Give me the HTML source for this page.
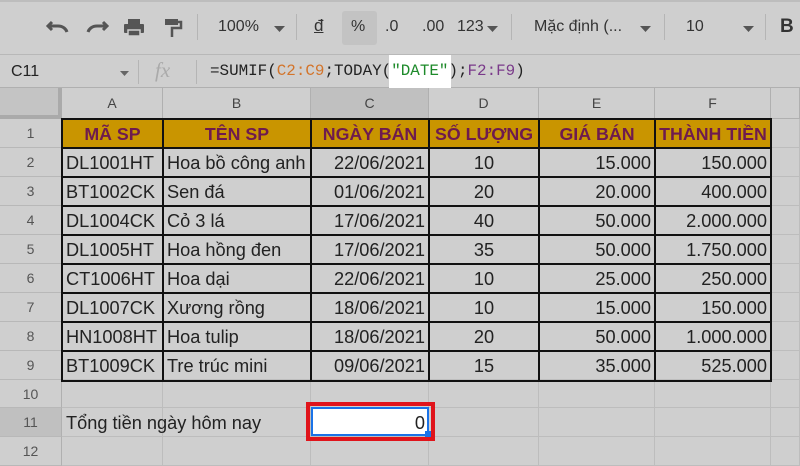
<!DOCTYPE html>
<html><head><meta charset="utf-8"><style>
*{margin:0;padding:0;box-sizing:border-box}
body{width:800px;height:450px;overflow:hidden;background:#cfcfcf;font-family:"Liberation Sans",Arial,sans-serif;position:relative;color:#222}
.a{position:absolute}
.tb{left:0;top:0;width:800px;height:55px;background:#cfcfcf;border-top:2px solid #bdbdbd;border-bottom:1px solid #b8b8b8}
.fb{left:0;top:55px;width:800px;height:33px;border-bottom:1px solid #b0b0b0}
.sep{width:1px;background:#b5b5b5}
.c{position:absolute;font-size:18.2px;line-height:30px;white-space:nowrap;overflow:hidden;padding:0 4px}
.h{background:#c99500;color:#6e1b4e;font-weight:bold;text-align:center;font-size:17.8px;padding:0 2px}
.mono{font-family:"Liberation Mono",monospace}
</style></head><body>
<div class="a tb"></div>
<svg class="a" style="left:45px;top:17px" width="150" height="22" viewBox="0 0 150 22">
<path d="M7 5 L3 9 L7 13 M3 9 H13 C18 9 21 12 22 15" fill="none" stroke="#555" stroke-width="3"/>
<path d="M58 5 L62 9 L58 13 M62 9 H52 C47 9 44 12 43 15" fill="none" stroke="#555" stroke-width="3"/>
<rect x="83" y="2" width="12" height="5" fill="#555"/><rect x="79" y="7" width="20" height="9" rx="1" fill="#555"/><rect x="83" y="13" width="12" height="6" fill="#555" stroke="#cfcfcf" stroke-width="1.5"/>
<rect x="120" y="2" width="13" height="6" fill="#555"/><path d="M133 5 H136 V11 H127 V20" fill="none" stroke="#555" stroke-width="2.5"/>
</svg>
<div class="a sep" style="left:197px;top:14px;height:26px"></div>
<div class="a" style="left:218px;top:18px;font-size:16px;color:#333">100%</div>
<svg class="a" style="left:274px;top:26px" width="12" height="7"><path d="M0 0H11L5.5 6Z" fill="#555"/></svg>
<div class="a sep" style="left:296px;top:14px;height:26px"></div>
<div class="a" style="left:314px;top:16px;font-size:17px;color:#333;text-decoration:underline">đ</div>
<div class="a" style="left:342px;top:11px;width:35px;height:34px;background:#c3c3c3;border-radius:3px"></div>
<div class="a" style="left:351px;top:18px;font-size:16px;color:#333">%</div>
<div class="a" style="left:385px;top:18px;font-size:16px;color:#333">.0</div>
<div class="a" style="left:422px;top:18px;font-size:16px;color:#333">.00</div>
<div class="a" style="left:457px;top:18px;font-size:16px;color:#333">123</div>
<svg class="a" style="left:487px;top:26px" width="12" height="7"><path d="M0 0H11L5.5 6Z" fill="#555"/></svg>
<div class="a sep" style="left:511px;top:14px;height:26px"></div>
<div class="a" style="left:534px;top:18px;font-size:16px;color:#333">Mặc định (...</div>
<svg class="a" style="left:640px;top:26px" width="12" height="7"><path d="M0 0H11L5.5 6Z" fill="#555"/></svg>
<div class="a sep" style="left:664px;top:14px;height:26px"></div>
<div class="a" style="left:686px;top:18px;font-size:16px;color:#333">10</div>
<svg class="a" style="left:743px;top:26px" width="12" height="7"><path d="M0 0H11L5.5 6Z" fill="#555"/></svg>
<div class="a sep" style="left:765px;top:14px;height:26px"></div>
<div class="a" style="left:780px;top:16px;font-size:19px;font-weight:bold;color:#333">B</div>
<div class="a fb"></div>
<div class="a" style="left:11px;top:63px;font-size:16px;color:#222">C11</div>
<svg class="a" style="left:120px;top:71px" width="10" height="6"><path d="M0 0H9L4.5 5Z" fill="#666"/></svg>
<div class="a sep" style="left:138px;top:60px;height:24px"></div>
<div class="a" style="left:155px;top:58px;font-size:21px;font-style:italic;color:#aaa;font-family:'Liberation Serif',serif">fx</div>
<div class="a sep" style="left:196px;top:60px;height:24px"></div>
<div class="a" style="left:389px;top:55px;width:62px;height:33px;background:#fff"></div>
<div class="a mono" style="left:210px;top:62px;font-size:15.9px;color:#222;white-space:pre">=SUMIF(<span style="color:#d3742a">C2:C9</span>;TODAY(<span style="color:#1d8a2a">"DATE"</span>);<span style="color:#7a3a8a">F2:F9</span>)</div>
<div id="g"></div>
<script>
var cols=[[62,163],[163,311],[311,429],[429,539],[539,655],[655,771],[771,800]];
var L="ABCDEFG",h='';
h+='<div class="a" style="left:0;top:88px;width:62px;height:31px;background:#c4c4c4;border-right:4px solid #aaa;border-bottom:4px solid #aaa"></div>';
cols.forEach(function(c,i){h+='<div class="a" style="left:'+c[0]+'px;top:88px;width:'+(c[1]-c[0])+'px;height:31px;border-right:1px solid #b0b0b0;border-bottom:1px solid #b0b0b0;text-align:center;line-height:30px;font-size:14px;color:#444;background:'+(i==2?'#c0c0c0':'#cfcfcf')+'">'+(i<6?L[i]:'')+'</div>';});
var rt=[119,148,177,206,235,264,293,322,351,380,408,437];
for(var r=0;r<12;r++){var t=rt[r],hh=(rt[r+1]||466)-t;
h+='<div class="a" style="left:0;top:'+t+'px;width:62px;height:'+hh+'px;border-right:1px solid #b0b0b0;border-bottom:1px solid #b8b8b8;text-align:center;line-height:'+hh+'px;font-size:14px;color:#555;background:'+(r==10?'#c0c0c0':'#cfcfcf')+'">'+(r+1)+'</div>';
cols.forEach(function(c){h+='<div class="a" style="left:'+c[0]+'px;top:'+t+'px;width:'+(c[1]-c[0])+'px;height:'+hh+'px;border-right:1px solid #bdbdbd;border-bottom:1px solid #bdbdbd"></div>';});}
var hd=["MÃ SP","TÊN SP","NGÀY BÁN","SỐ LƯỢNG","GIÁ BÁN","THÀNH TIỀN"];
var d=[["DL1001HT","Hoa bồ công anh","22/06/2021","10","15.000","150.000"],["BT1002CK","Sen đá","01/06/2021","20","20.000","400.000"],["DL1004CK","Cỏ 3 lá","17/06/2021","40","50.000","2.000.000"],["DL1005HT","Hoa hồng đen","17/06/2021","35","50.000","1.750.000"],["CT1006HT","Hoa dại","22/06/2021","10","25.000","250.000"],["DL1007CK","Xương rồng","18/06/2021","10","15.000","150.000"],["HN1008HT","Hoa tulip","18/06/2021","20","50.000","1.000.000"],["BT1009CK","Tre trúc mini","09/06/2021","15","35.000","525.000"]];
for(var i=0;i<6;i++){var c=cols[i];h+='<div class="c h" style="left:'+c[0]+'px;top:119px;width:'+(c[1]-c[0])+'px;height:29px">'+hd[i]+'</div>';}
for(var r=0;r<8;r++)for(var i=0;i<6;i++){var c=cols[i];var al=i<2?'left':(i==3?'center':'right');h+='<div class="c" style="left:'+c[0]+'px;top:'+rt[r+1]+'px;width:'+(c[1]-c[0])+'px;height:29px;text-align:'+al+'">'+d[r][i]+'</div>';}
h+='<div class="a" style="left:61px;top:118px;width:711px;height:264px;border:2px solid #111"></div>';
for(var r=1;r<9;r++)h+='<div class="a" style="left:61px;top:'+(rt[r]-1)+'px;width:711px;height:2px;background:#111"></div>';
for(var i=1;i<6;i++)h+='<div class="a" style="left:'+(cols[i][0]-1)+'px;top:118px;width:2px;height:264px;background:#111"></div>';
h+='<div class="c" style="left:62px;top:408px;width:250px;height:29px">Tổng tiền ngày hôm nay</div>';
h+='<div class="a" style="left:306px;top:402px;width:129px;height:39px;border:4px solid #e0141b"></div>';
h+='<div class="a" style="left:311px;top:407px;width:118px;height:29px;background:#fff;border:2px solid #1a73e8"></div>';
h+='<div class="c" style="left:311px;top:408px;width:118px;height:29px;text-align:right">0</div>';
h+='<div class="a" style="left:425px;top:431px;width:6px;height:6px;background:#1a73e8"></div>';
document.getElementById('g').innerHTML=h;
</script>
</body></html>
